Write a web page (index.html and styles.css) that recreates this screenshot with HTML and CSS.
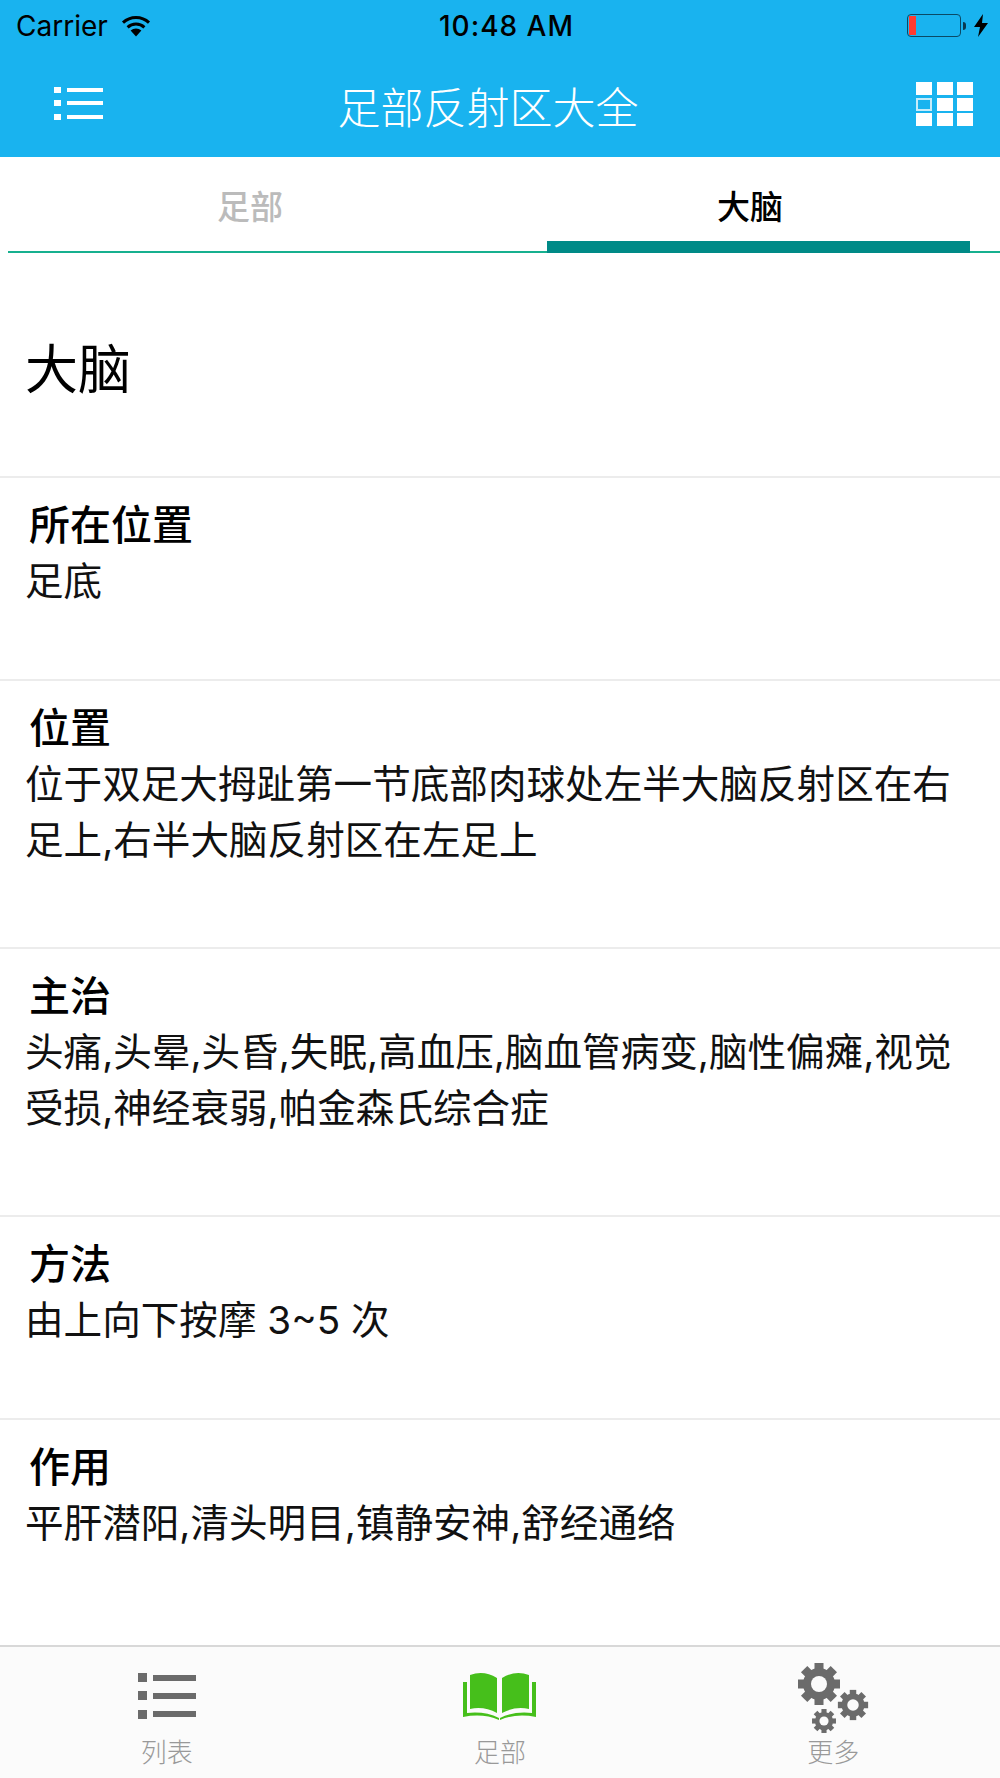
FILE: index.html
```html
<!DOCTYPE html>
<html lang="zh">
<head>
  <meta charset="UTF-8">
  <meta name="viewport" content="width=device-width, initial-scale=1.0">
  <title>足部反射区大全</title>
  <link rel="stylesheet" href="styles.css">
</head>
<body>
  <div class="app">
    <header class="top">
      <div class="status">
        <div class="status-left">
          <span>Carrier</span>
          <svg class="wifi" width="30" height="22" viewBox="0 0 30 22">
            <path d="M15 21.5 L9.6 15.6 A8 8 0 0 1 20.4 15.6 Z" fill="#000"/>
            <path d="M6.6 12.4 A12.4 12.4 0 0 1 23.4 12.4" fill="none" stroke="#000" stroke-width="3"/>
            <path d="M2 7.6 A19 19 0 0 1 28 7.6" fill="none" stroke="#000" stroke-width="3"/>
          </svg>
        </div>
        <div class="status-time">10:48 AM</div>
        <div class="status-right">
          <div class="battery"><div class="battery-fill"></div></div>
          <div class="battery-tip"></div>
          <svg class="bolt" width="14" height="23" viewBox="0 0 14 23">
            <path d="M9 0 L0 13 H6 L4 23 L14 9 H8 Z" fill="#000"/>
          </svg>
        </div>
      </div>
      <div class="navbar">
        <svg class="nav-list" width="49" height="34" viewBox="0 0 49 34">
          <g fill="#fff">
            <rect x="0" y="0" width="7" height="6"/>
            <rect x="0" y="13" width="7" height="6"/>
            <rect x="0" y="27" width="7" height="6"/>
            <rect x="13" y="1" width="36" height="4"/>
            <rect x="13" y="14" width="36" height="4"/>
            <rect x="13" y="28" width="36" height="4"/>
          </g>
        </svg>
        <h1 class="nav-title">足部反射区大全</h1>
        <div class="grid-icon">
          <i></i><i></i><i></i>
          <i class="grid-open"></i><i></i><i></i>
          <i></i><i></i><i></i>
        </div>
      </div>
    </header>

    <nav class="tabs">
      <div class="tab">足部</div>
      <div class="tab tab-on">大脑</div>
      <div class="tab-bar"></div>
    </nav>

    <main class="detail">
      <div class="name">大脑</div>
      <section class="block block-short">
        <h2>所在位置</h2>
        <p>足底</p>
      </section>
      <section class="block block-long">
        <h2>位置</h2>
        <p>位于双足大拇趾第一节底部肉球处左半大脑反射区在右足上,右半大脑反射区在左足上</p>
      </section>
      <section class="block block-long">
        <h2>主治</h2>
        <p>头痛,头晕,头昏,失眠,高血压,脑血管病变,脑性偏瘫,视觉受损,神经衰弱,帕金森氏综合症</p>
      </section>
      <section class="block block-short">
        <h2>方法</h2>
        <p>由上向下按摩 3~5 次</p>
      </section>
      <section class="block block-last">
        <h2>作用</h2>
        <p>平肝潜阳,清头明目,镇静安神,舒经通络</p>
      </section>
    </main>

    <footer class="bottom">
      <div class="bottom-item">
        <svg width="72" height="72" viewBox="0 0 72 72">
          <g fill="#6b6b6b">
            <rect x="7" y="11" width="9" height="9"/>
            <rect x="7" y="29" width="9" height="9"/>
            <rect x="7" y="48" width="9" height="9"/>
            <rect x="22" y="13" width="43" height="6"/>
            <rect x="22" y="31" width="43" height="6"/>
            <rect x="22" y="49" width="43" height="6"/>
          </g>
        </svg>
        <span>列表</span>
      </div>
      <div class="bottom-item">
        <svg width="73" height="72" viewBox="0 0 73 72">
          <g fill="#46bf1b">
            <path d="M7 13 Q21 8 34 16 V51 Q21 44 7 47 Z"/>
            <path d="M66 13 Q52 8 39 16 V51 Q52 44 66 47 Z"/>
            <path d="M0 20 H4 V51 Q22 49 36 56 V58 Q20 51 0 55 Z"/>
            <path d="M73 20 H69 V51 Q51 49 37 56 V58 Q53 51 73 55 Z"/>
          </g>
        </svg>
        <span>足部</span>
      </div>
      <div class="bottom-item">
        <svg width="72" height="72" viewBox="0 0 72 72">
          <defs>
            <g id="gear">
              <g fill="#6b6b6b">
                <rect x="-4.5" y="-21" width="9" height="42"/>
                <rect x="-4.5" y="-21" width="9" height="42" transform="rotate(45)"/>
                <rect x="-4.5" y="-21" width="9" height="42" transform="rotate(90)"/>
                <rect x="-4.5" y="-21" width="9" height="42" transform="rotate(135)"/>
                <circle r="16"/>
              </g>
              <circle r="8" fill="#fbfbfb"/>
            </g>
          </defs>
          <use href="#gear" transform="translate(22 22)"/>
          <use href="#gear" transform="translate(56 43) scale(0.72)"/>
          <use href="#gear" transform="translate(27 59) scale(0.57)"/>
        </svg>
        <span>更多</span>
      </div>
    </footer>
  </div>
</body>
</html>
```

FILE: styles.css
```css
* {
  box-sizing: border-box;
}
body {
  margin: 0;
  background-color: #fff;
  color: #000;
  font-family: "Liberation Sans", "Noto Sans CJK SC", sans-serif;
}
.app {
  width: 1000px;
  height: 1778px;
  display: flex;
  flex-direction: column;
  overflow: hidden;
}

/* header */
.top {
  height: 157px;
  background-color: #19b3ef;
}
.status {
  height: 51px;
  padding: 0 12px 0 16px;
  display: grid;
  grid-template-columns: 1fr auto 1fr;
  align-items: center;
  font-family: Inter, "Liberation Sans", sans-serif;
  font-size: 28px;
}
.status-left {
  display: flex;
  align-items: center;
  gap: 13px;
}
.status-time {
  margin-left: 9px;
  font-weight: 500;
  letter-spacing: 1px;
}
.status-right {
  display: flex;
  align-items: center;
  justify-content: flex-end;
}
.battery {
  width: 54px;
  height: 23px;
  border: 1.5px solid #0a4a66;
  border-radius: 4px;
  padding: 1px;
}
.battery-fill {
  width: 7px;
  height: 100%;
  background-color: #ff3b30;
}
.battery-tip {
  width: 3px;
  height: 8px;
  margin-left: 2px;
  background-color: #0a3a50;
  border-radius: 0 4px 4px 0;
}
.bolt {
  margin-left: 8px;
}
.navbar {
  height: 106px;
  padding: 0 27px 0 54px;
  display: grid;
  grid-template-columns: 1fr auto 1fr;
  align-items: center;
}
.nav-title {
  margin: 2px 51px 0 0;
  color: #fff;
  font-family: "Noto Sans CJK SC", sans-serif;
  font-size: 43px;
  font-weight: 300;
  line-height: 60px;
}
.grid-icon {
  justify-self: end;
  width: 57px;
  height: 44px;
  display: grid;
  grid-template-columns: repeat(3, 16px);
  grid-template-rows: repeat(3, 13px);
  justify-content: space-between;
  align-content: space-between;
}
.grid-icon i {
  background-color: #fff;
}
.grid-icon .grid-open {
  background-color: transparent;
  border: 2px solid #c6ecfa;
}

/* tabs */
.tabs {
  position: relative;
  height: 96px;
  display: grid;
  grid-template-columns: 1fr 1fr;
}
.tabs::after {
  content: "";
  position: absolute;
  left: 8px;
  right: 0;
  bottom: 0;
  height: 2px;
  background-color: #17b08f;
}
.tab {
  text-align: center;
  font-family: "Noto Sans CJK SC", sans-serif;
  font-size: 33px;
  font-weight: 500;
  line-height: 96px;
  color: #bbb;
}
.tab-on {
  color: #000;
}
.tab-bar {
  position: absolute;
  left: 547px;
  bottom: 0;
  width: 423px;
  height: 12px;
  background-color: #008a87;
  z-index: 1;
}

/* detail */
.detail {
  flex: 1;
}
.name {
  height: 225px;
  padding-left: 25px;
  font-size: 53px;
  line-height: 235px;
  border-bottom: 2px solid #ececec;
}
.block {
  padding: 13px 25px 0;
  border-bottom: 2px solid #ececec;
}
.block-short {
  height: 203px;
}
.block-long {
  height: 268px;
}
.block-last {
  border-bottom: 0;
}
.block h2 {
  margin: 0 0 0 4px;
  font-family: "Noto Sans CJK SC", sans-serif;
  font-size: 41px;
  font-weight: 500;
  line-height: 62px;
}
.block p {
  margin: 0;
  font-family: Inter, "Noto Sans CJK SC", sans-serif;
  font-size: 38.6px;
  line-height: 56px;
  color: #111;
}

/* bottom tabs */
.bottom {
  height: 133px;
  padding-top: 15px;
  display: grid;
  grid-template-columns: repeat(3, 1fr);
  background-color: #fbfbfb;
  border-top: 2px solid #d8d8d8;
}
.bottom-item {
  display: flex;
  flex-direction: column;
  align-items: center;
  color: #999;
  font-family: "Noto Sans CJK SC", sans-serif;
  font-size: 26px;
  line-height: 34px;
  font-weight: 300;
}
```
